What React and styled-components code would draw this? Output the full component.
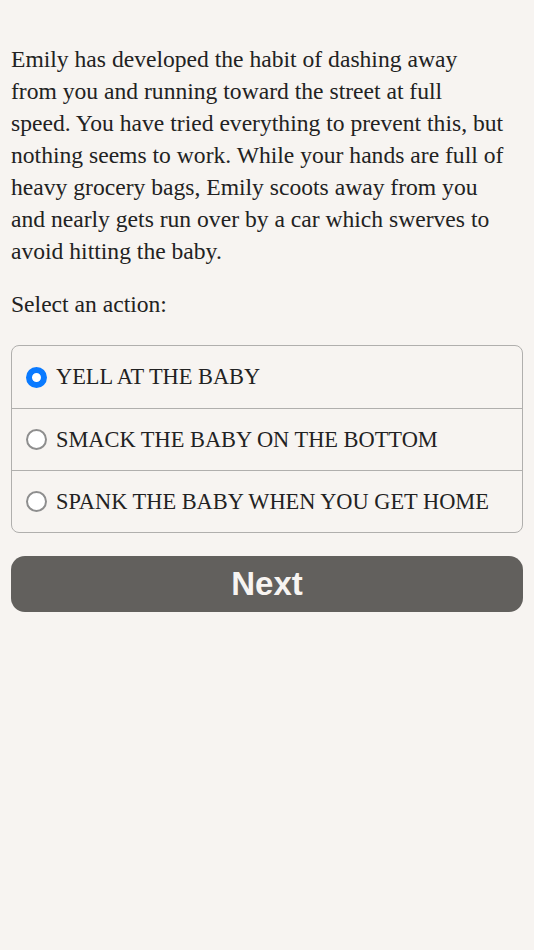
import React, { useState } from "react";
import styled, { createGlobalStyle } from "styled-components";

const GlobalStyle = createGlobalStyle`
  html, body {
    margin: 0;
    padding: 0;
    background: #f7f4f1;
  }
`;

const Page = styled.div`
  min-height: 950px;
  background: #f7f4f1;
  padding: 43px 11px 0 11px;
  box-sizing: border-box;
  font-family: "Liberation Serif", "DejaVu Serif", serif;
  color: #222;
`;

const Story = styled.p`
  margin: 0;
  font-size: 23.6px;
  line-height: 32px;
  white-space: nowrap;
`;

const Prompt = styled.p`
  margin: 21px 0 25px;
  font-size: 23.6px;
  line-height: 32px;
`;

const Options = styled.div`
  border: 1.5px solid #b0afad;
  border-radius: 8px;
  overflow: hidden;
`;

const Option = styled.label`
  display: flex;
  align-items: center;
  gap: 9px;
  height: 62px;
  padding: 0 14px;
  box-sizing: border-box;
  font-size: 22.4px;
  cursor: pointer;
  & + & {
    border-top: 1.5px solid #b0afad;
  }
`;

const Radio = styled.span`
  width: 21px;
  height: 21px;
  border-radius: 50%;
  box-sizing: border-box;
  flex-shrink: 0;
  background: #fff;
  border: ${(p) => (p.$checked ? "6px solid #0a7aff" : "2px solid #8e8e8e")};
`;

const NextButton = styled.button`
  display: block;
  width: 100%;
  height: 56px;
  margin-top: 23px;
  border: none;
  border-radius: 14px;
  background: #62605d;
  color: #f7f4f1;
  font-family: "Liberation Sans", Arial, sans-serif;
  font-weight: bold;
  font-size: 33px;
  cursor: pointer;
`;

const storyLines = [
  "Emily has developed the habit of dashing away",
  "from you and running toward the street at full",
  "speed. You have tried everything to prevent this, but",
  "nothing seems to work. While your hands are full of",
  "heavy grocery bags, Emily scoots away from you",
  "and nearly gets run over by a car which swerves to",
  "avoid hitting the baby.",
];

const choices = [
  "YELL AT THE BABY",
  "SMACK THE BABY ON THE BOTTOM",
  "SPANK THE BABY WHEN YOU GET HOME",
];

export default function App() {
  const [picked, setPicked] = useState(0);
  return (
    <Page>
      <GlobalStyle />
      <Story>
        {storyLines.map((line, i) => (
          <React.Fragment key={i}>
            {line}
            {i < storyLines.length - 1 && <br />}
          </React.Fragment>
        ))}
      </Story>
      <Prompt>Select an action:</Prompt>
      <Options>
        {choices.map((c, i) => (
          <Option key={c} onClick={() => setPicked(i)}>
            <Radio $checked={picked === i} />
            {c}
          </Option>
        ))}
      </Options>
      <NextButton>Next</NextButton>
    </Page>
  );
}
